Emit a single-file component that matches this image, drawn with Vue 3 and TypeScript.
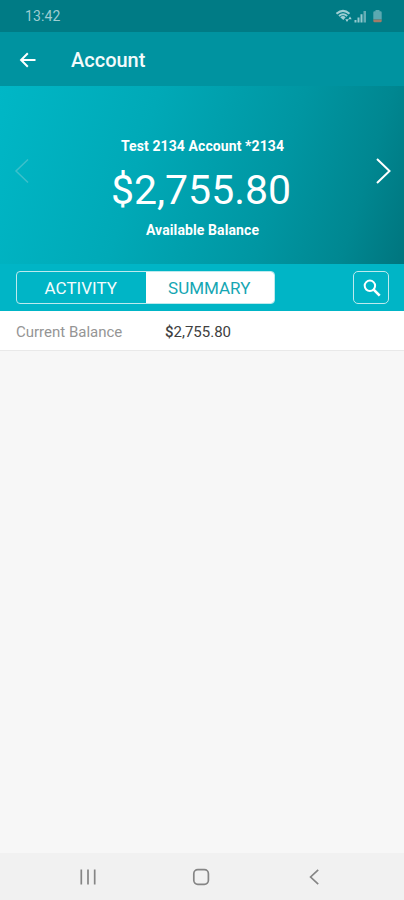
<script setup lang="ts">
import { ref } from 'vue'

type Tab = 'activity' | 'summary'

const activeTab = ref<Tab>('summary')
const tabs: { id: Tab; label: string }[] = [
  { id: 'activity', label: 'ACTIVITY' },
  { id: 'summary', label: 'SUMMARY' },
]
const rows = [{ label: 'Current Balance', value: '$2,755.80' }]
</script>

<template>
  <div class="screen">
    <div class="status">
      <span class="time">13:42</span>
      <div class="indicators">
        <svg class="wifi" viewBox="0 0 17 14" width="17" height="14">
          <path d="M.5 4.700Q7-1 13.500 4.700M3 7Q7 3.600 11.200 7" fill="none" stroke="#9fced3" stroke-width="2" />
          <path d="M4.200 8.200Q7 6 9.700 8.200L7.300 11Z" fill="#9fced3" />
          <path d="M9.300 10.200h3.400L11 13zM12.300 10.200 14 7.500l1.700 2.700z" fill="#a9d3d7" />
        </svg>
        <svg class="signal" viewBox="0 0 13 13" width="13" height="13">
          <path d="M.5 10h2v2.500h-2zM3.500 7.500h2v5h-2zM6.500 4.300h2v8.200h-2z" fill="#94c9ce" />
          <path d="M9.500 1h2.500v11.500H9.500z" fill="#65adb4" />
        </svg>
        <svg class="battery" viewBox="0 0 9 13" width="9" height="13">
          <path d="M2.500 0h4v1.200h1Q8.700 1.200 8.700 2.500V9.500H.3v-7Q.3 1.200 1.500 1.200h1z" fill="#5ba9b1" />
          <path d="M.3 9.500h8.400v1.500Q8.700 12.300 7.500 12.300h-6Q.3 12.300.3 11z" fill="#a37b68" />
        </svg>
      </div>
    </div>

    <header class="appbar">
      <svg class="back" viewBox="0 0 18 18" width="18" height="18">
        <path d="M16.500 9H2.500M8.800 2.300 2.100 9l6.700 6.700" />
      </svg>
      <h1>Account</h1>
    </header>

    <section class="hero">
      <svg class="chevron previous" viewBox="0 0 16 28" width="16" height="28">
        <path d="M14 2.500 2 14l12 11.500" />
      </svg>
      <div class="balance">
        <div class="name">Test 2134 Account *2134</div>
        <div class="amount">$2,755.80</div>
        <div class="caption">Available Balance</div>
      </div>
      <svg class="chevron" viewBox="0 0 16 28" width="16" height="28">
        <path d="M2 2 14.500 14 2 26" />
      </svg>
    </section>

    <div class="toolbar">
      <div class="tabs">
        <button
          v-for="tab in tabs"
          :key="tab.id"
          :class="{ active: activeTab === tab.id }"
          @click="activeTab = tab.id"
        >
          <span>{{ tab.label }}</span>
        </button>
      </div>
      <button class="search" aria-label="Search">
        <svg viewBox="0 0 18 18" width="18" height="18">
          <circle cx="6.900" cy="6.800" r="5.200" fill="none" stroke="#fff" stroke-width="2" />
          <path d="m10.700 10.600 6 6" stroke="#fff" stroke-width="2.600" />
        </svg>
      </button>
    </div>

    <div v-for="row in rows" :key="row.label" class="row">
      <span class="label">{{ row.label }}</span>
      <span class="value"><span class="currency">{{ row.value.slice(0, 1) }}</span>{{ row.value.slice(1) }}</span>
    </div>

    <main class="empty"></main>

    <nav class="navbar">
      <svg viewBox="0 0 18 18" width="18" height="18">
        <path d="M2.300 1.500v15M9 1.500v15M15.700 1.500v15" />
      </svg>
      <svg viewBox="0 0 18 18" width="18" height="18">
        <rect x="1.800" y="1.700" width="14.600" height="14.600" rx="4" />
      </svg>
      <svg viewBox="0 0 18 18" width="18" height="18">
        <path d="M13.200 1.800 5.600 9l7.600 7.200" />
      </svg>
    </nav>
  </div>
</template>

<style>
body {
  margin: 0;
}
</style>

<style scoped>
.screen {
  display: flex;
  flex-direction: column;
  width: 404px;
  height: 900px;
  overflow: hidden;
  background: #f7f7f7;
  font-family: Roboto, "Liberation Sans", sans-serif;
  white-space: nowrap;
}
.status {
  box-sizing: border-box;
  flex: 0 0 32px;
  display: flex;
  align-items: center;
  justify-content: space-between;
  padding: 0 22px 0 25px;
  background: #007b85;
}
.time {
  color: #9dcdd2;
  font-size: 14px;
  letter-spacing: 0.100px;
  line-height: 32px;
}
.indicators {
  display: flex;
  align-items: center;
}
.wifi {
  margin-top: -1px;
}
.signal {
  margin-left: 1px;
}
.battery {
  margin-left: 6px;
}
.appbar {
  box-sizing: border-box;
  flex: 0 0 54px;
  display: flex;
  align-items: center;
  padding: 2px 0 0 19px;
  background: #0093a0;
}
.back {
  fill: none;
  stroke: #fff;
  stroke-width: 2;
}
h1 {
  margin: 0 0 0 34px;
  color: #f3fbfc;
  font-size: 20px;
  font-weight: 500;
  line-height: 24px;
}
.hero {
  box-sizing: border-box;
  flex: 0 0 178px;
  display: flex;
  align-items: center;
  justify-content: space-between;
  padding: 0 13px 8px 14px;
  background: linear-gradient(107deg, #00b7c6 0%, #00a9b7 35%, #0096a2 67%, #008791 86%, #00757e 100%);
}
.chevron {
  fill: none;
  stroke: #fff;
  stroke-width: 2;
}
.previous {
  stroke: #3cc0cb;
  stroke-width: 1.500;
}
.balance {
  padding: 33px 3px 0 0;
  color: #fff;
  text-align: center;
}
.name,
.caption {
  padding-left: 3px;
  font-size: 14px;
  font-weight: 700;
  letter-spacing: 0.100px;
  line-height: 18px;
}
.amount {
  margin: 10px 0 6px;
  font-size: 41px;
  line-height: 50px;
}
.toolbar {
  box-sizing: border-box;
  flex: 0 0 47px;
  display: flex;
  align-items: center;
  justify-content: space-between;
  padding: 0 15px 0 16px;
  background: #00b5c6;
}
.tabs {
  box-sizing: border-box;
  display: flex;
  width: 259px;
  height: 33px;
  border: 1px solid #bdeaee;
  border-radius: 4px;
  overflow: hidden;
}
button {
  padding: 0;
  border: 0;
  background: none;
  color: #f3fcfd;
  font-family: inherit;
  font-size: 17px;
  line-height: 31px;
}
.tabs button {
  flex: 1;
  padding: 1px 1px 0 0;
  line-height: 30px;
}
.tabs .active {
  background: #fff;
  color: #15a6b3;
}
.search {
  box-sizing: border-box;
  display: flex;
  align-items: center;
  justify-content: center;
  width: 36px;
  height: 33px;
  padding: 0 0 0 2px;
  border: 1px solid #bdeaee;
  border-radius: 5px;
}
.row {
  box-sizing: border-box;
  flex: 0 0 40px;
  display: flex;
  align-items: center;
  padding: 2px 16px 0;
  border-bottom: 1px solid #e9e9e9;
  background: #fff;
  font-size: 15px;
}
.label {
  width: 149px;
  color: #959595;
}
.value {
  color: #404040;
}
.currency {
  font-weight: 500;
}
.empty {
  flex: 1;
}
.navbar {
  box-sizing: border-box;
  flex: 0 0 47px;
  display: flex;
  align-items: center;
  gap: 95px;
  padding-left: 79px;
  background: #f1f1f1;
}
.navbar svg {
  fill: none;
  stroke: #858585;
  stroke-width: 1.700;
}
</style>
